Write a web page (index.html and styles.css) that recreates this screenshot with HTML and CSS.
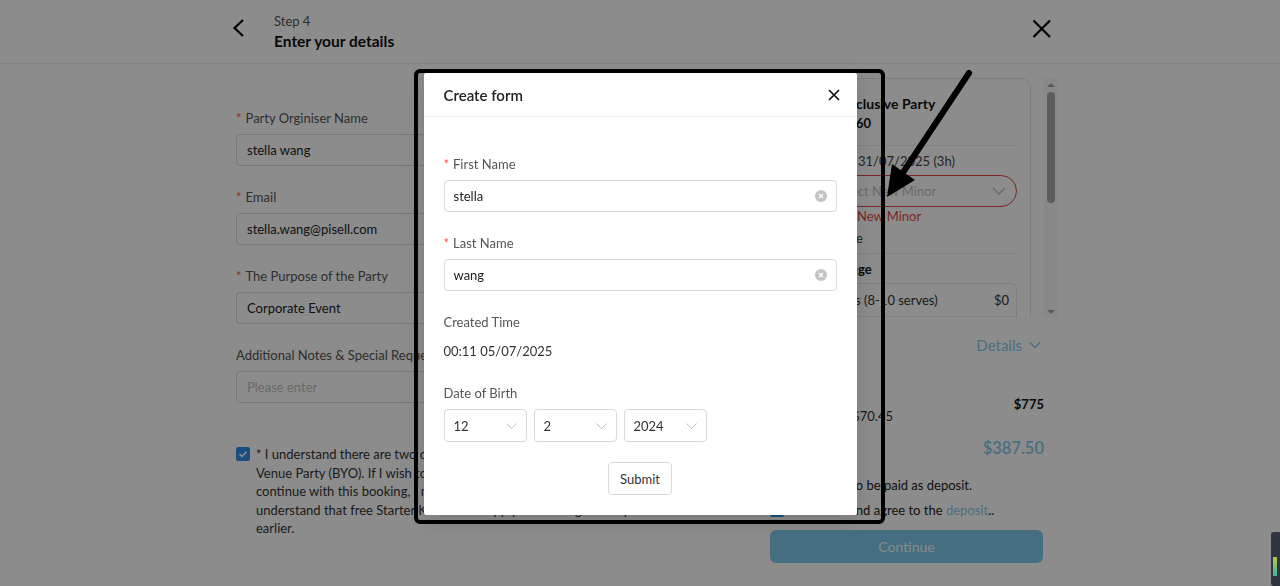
FILE: index.html
```html
<!DOCTYPE html>
<html lang="en">
<head>
    <meta charset="UTF-8">
    <meta name="viewport" content="width=device-width, initial-scale=1.0">
    <title>Enter your details</title>
    <link rel="stylesheet" href="styles.css">
</head>
<body>
    <header class="topbar">
        <div class="topbar-inner">
            <button class="icon-btn">
                <svg width="24" height="24" viewBox="0 0 24 24"><path d="M17 4 L8.5 12 L17 20" fill="none" stroke="#000" stroke-width="2.2"/></svg>
            </button>
            <div class="step">
                <div class="step-num">Step 4</div>
                <div class="step-title">Enter your details</div>
            </div>
            <button class="icon-btn">
                <svg width="24" height="24" viewBox="0 0 24 24"><path d="M3.5 4.5 L20 21 M20 4.5 L3.5 21" fill="none" stroke="#000" stroke-width="2.2"/></svg>
            </button>
        </div>
    </header>

    <main class="page">
        <form class="details-form">
            <div class="field">
                <label class="field-label"><span class="req">*</span>Party Orginiser Name</label>
                <input class="input" value="stella wang">
            </div>
            <div class="field">
                <label class="field-label"><span class="req">*</span>Email</label>
                <input class="input" value="stella.wang@pisell.com">
            </div>
            <div class="field">
                <label class="field-label"><span class="req">*</span>The Purpose of the Party</label>
                <input class="input" value="Corporate Event">
            </div>
            <div class="field">
                <label class="field-label">Additional Notes &amp; Special Requests</label>
                <input class="input" placeholder="Please enter">
            </div>
            <div class="terms">
                <span class="checkbox">
                    <svg width="14" height="14" viewBox="0 0 14 14"><path d="M3.5 7.2 L6 9.5 L10.5 4.8" fill="none" stroke="#fff" stroke-width="1.6"/></svg>
                </span>
                <p>* I understand there are two options: Exclusive Party or Bring Your Own<br>
                Venue Party (BYO). If I wish to bring my own food, I must choose BYO. To<br>
                continue with this booking, I must not bring outside food. I also<br>
                understand that free Starter Kick tickets apply to bookings 14 days or<br>
                earlier.</p>
            </div>
        </form>

        <aside class="side">
            <div class="side-scroll">
                <div class="card-view">
                    <div class="card">
                        <div class="product">
                            <div class="thumb"></div>
                            <div>
                                <div class="product-name">Exclusive Party</div>
                                <div class="product-price">$260</div>
                            </div>
                        </div>
                        <div class="divider first"></div>
                        <div class="kv"><span class="kv-key">Date</span><span>31/07/2025 (3h)</span></div>
                        <div class="pill-select">
                            <span>Select New Minor</span>
                            <svg width="14" height="8" viewBox="0 0 14 8"><path d="M1 1 L7 7 L13 1" fill="none" stroke="#bfbfbf" stroke-width="1.3"/></svg>
                        </div>
                        <div class="add-minor">+ Add New Minor</div>
                        <div class="muted-line">Private Venue</div>
                        <div class="divider"></div>
                        <div class="section-title">Venue Package</div>
                        <div class="pkg">
                            <div class="pkg-row"><span>Mini Cakes (8-10 serves)</span><span>$0</span></div>
                            <div class="pkg-row"><span>Party Food Platter</span><span>$0</span></div>
                            <div class="pkg-row"><span>Soft Drinks Jug</span><span>$0</span></div>
                            <div class="pkg-row"><span>Party Bags</span><span>$0</span></div>
                        </div>
                        <div class="section-title">Add-ons</div>
                        <div class="kv"><span class="kv-key">Extra</span><span>None</span></div>
                    </div>
                </div>
                <div class="scrollbar">
                    <span class="arrow-up"></span>
                    <span class="thumb-bar"></span>
                    <span class="arrow-down"></span>
                </div>
            </div>

            <div class="summary">
                <div class="details-toggle">
                    Details
                    <svg width="12" height="8" viewBox="0 0 12 8"><path d="M1 1.5 L6 6.5 L11 1.5" fill="none" stroke="#86c9e8" stroke-width="1.5"/></svg>
                </div>
                <div class="total-row">
                    <div>
                        <div>Total</div>
                        <div>Including GST $70.45</div>
                    </div>
                    <div class="total-price">$775</div>
                </div>
                <div class="deposit-row">
                    <span>Deposit</span>
                    <span class="deposit-price">$387.50</span>
                </div>
                <div class="note">50% of total to be paid as deposit.</div>
                <div class="agree">
                    <span class="checkbox"></span>
                    <span>I've read and agree to the <a href="#">deposit</a>..</span>
                </div>
                <button class="continue-btn" type="button">Continue</button>
            </div>
        </aside>
    </main>

    <div class="mask"></div>

    <div class="modal">
        <div class="modal-head">
            <div class="modal-title">Create form</div>
            <svg class="modal-close" width="12" height="12" viewBox="0 0 12 12"><path d="M1 1 L11 11 M11 1 L1 11" fill="none" stroke="#111" stroke-width="1.7"/></svg>
        </div>
        <div class="modal-body">
            <div class="m-field">
                <div class="m-label"><span class="req">*</span>First Name</div>
                <div class="m-input">
                    <span>stella</span>
                    <svg width="12" height="12" viewBox="0 0 12 12"><circle cx="6" cy="6" r="6" fill="#c4c4c4"/><path d="M4 4 L8 8 M8 4 L4 8" stroke="#fff" stroke-width="1.2"/></svg>
                </div>
            </div>
            <div class="m-field">
                <div class="m-label"><span class="req">*</span>Last Name</div>
                <div class="m-input">
                    <span>wang</span>
                    <svg width="12" height="12" viewBox="0 0 12 12"><circle cx="6" cy="6" r="6" fill="#c4c4c4"/><path d="M4 4 L8 8 M8 4 L4 8" stroke="#fff" stroke-width="1.2"/></svg>
                </div>
            </div>
            <div class="m-field">
                <div class="m-label">Created Time</div>
                <div class="m-value">00:11 05/07/2025</div>
            </div>
            <div class="m-field">
                <div class="m-label">Date of Birth</div>
                <div class="dob">
                    <div class="select"><span>12</span><svg width="11" height="6" viewBox="0 0 11 6"><path d="M0.5 0.5 L5.5 5.5 L10.5 0.5" fill="none" stroke="#bfbfbf" stroke-width="1"/></svg></div>
                    <div class="select"><span>2</span><svg width="11" height="6" viewBox="0 0 11 6"><path d="M0.5 0.5 L5.5 5.5 L10.5 0.5" fill="none" stroke="#bfbfbf" stroke-width="1"/></svg></div>
                    <div class="select"><span>2024</span><svg width="11" height="6" viewBox="0 0 11 6"><path d="M0.5 0.5 L5.5 5.5 L10.5 0.5" fill="none" stroke="#bfbfbf" stroke-width="1"/></svg></div>
                </div>
            </div>
            <div class="submit-row">
                <button class="btn" type="button">Submit</button>
            </div>
        </div>
    </div>

    <!-- annotation drawn over the screenshot -->
    <svg class="annotation" width="1280" height="586" viewBox="0 0 1280 586">
        <rect x="416" y="71" width="467" height="451" rx="4" fill="none" stroke="#000" stroke-width="4"/>
        <line x1="969" y1="73" x2="902" y2="174" stroke="#000" stroke-width="6" stroke-linecap="round"/>
        <polygon points="887,197 892,164 915,180" fill="#000"/>
    </svg>

    <div class="ext-widget"><span></span></div>
</body>
</html>
```

FILE: styles.css
```css
* {
    margin: 0;
    padding: 0;
    box-sizing: border-box;
}

body {
    font-family: Lato, 'Liberation Sans', sans-serif;
    font-size: 13px;
    color: #222;
    background: #fff;
    height: 586px;
    overflow: hidden;
}

input,
button {
    font: inherit;
    color: inherit;
}

/* top bar */
.topbar {
    height: 64px;
    border-bottom: 1px solid #ebebeb;
}

.topbar-inner {
    width: 828px;
    margin: 0 auto;
    display: flex;
    align-items: flex-start;
    padding-top: 12px;
}

.icon-btn {
    width: 24px;
    height: 24px;
    margin-top: 4px;
    border: none;
    background: none;
    display: flex;
}

.step {
    flex: 1;
    margin-left: 24px;
}

.step-num {
    font-size: 13px;
    line-height: 18px;
    color: #555;
}

.step-title {
    font-size: 15.5px;
    font-weight: 700;
    line-height: 22px;
    color: #111;
}

/* page */
.page {
    width: 808px;
    margin: 0 auto;
    padding-top: 14px;
    display: grid;
    grid-template-columns: 504px 274px;
    column-gap: 30px;
}

.details-form {
    padding-top: 29px;
}

.field {
    margin-bottom: 20px;
}

.field-label {
    display: block;
    line-height: 22px;
    margin-bottom: 5px;
    color: #555;
}

.req {
    color: #ff4d4f;
    margin-right: 4px;
}

.input {
    width: 100%;
    height: 32px;
    padding: 0 10px;
    border: 1px solid #d9d9d9;
    border-radius: 4px;
    background: #fff;
    color: #222;
    outline: none;
}

.input::placeholder {
    color: #bfbfbf;
}

.terms {
    display: flex;
    gap: 6px;
    padding-top: 22px;
    line-height: 18.5px;
    color: #333;
}

.checkbox {
    flex: none;
    width: 14px;
    height: 14px;
    margin-top: 2px;
    border-radius: 2px;
    background: #2f8fe6;
    display: flex;
}

/* right side */
.side-scroll {
    display: flex;
    height: 240px;
    margin-right: -14px;
}

.card-view {
    flex: 1;
    overflow: hidden;
    padding-right: 13px;
}

.card {
    border: 1px solid #e6e6e6;
    border-radius: 10px;
    padding: 15px 13px;
}

.product {
    display: flex;
    gap: 13px;
}

.thumb {
    width: 44px;
    height: 38px;
    border-radius: 6px;
    background: #eee;
}

.product-name {
    font-size: 14px;
    font-weight: 700;
    line-height: 20px;
    color: #111;
}

.product-price {
    font-weight: 700;
    line-height: 18px;
    color: #111;
}

.divider {
    height: 1px;
    background: #ececec;
    margin-top: 6px;
}

.divider.first {
    margin-top: 13px;
}

.kv {
    display: flex;
    margin-top: 5px;
    line-height: 20px;
    color: #444;
}

.kv-key {
    width: 74px;
}

.pill-select {
    height: 32px;
    margin: 4px 0 0 37px;
    padding: 0 10px 0 12px;
    border: 1px solid #e0473f;
    border-radius: 16px;
    display: flex;
    align-items: center;
    justify-content: space-between;
    color: #bfbfbf;
}

.add-minor {
    margin-left: 36px;
    line-height: 18px;
    color: #e0473f;
}

.muted-line {
    margin-top: 4px;
    line-height: 18px;
    color: #444;
}

.section-title {
    margin-top: 6px;
    line-height: 18px;
    font-weight: 700;
    color: #111;
}

.pkg {
    margin: 5px 0 10px;
    border: 1px solid #e6e6e6;
    border-radius: 6px;
}

.pkg-row {
    height: 32px;
    padding: 0 7px 0 13px;
    display: flex;
    align-items: center;
    justify-content: space-between;
    color: #333;
}

.pkg-row + .pkg-row {
    border-top: 1px solid #eee;
}

.scrollbar {
    width: 14px;
    padding: 5px 0 4px;
    display: flex;
    flex-direction: column;
    align-items: center;
    background: #f7f7f7;
}

.arrow-up {
    border-left: 4px solid transparent;
    border-right: 4px solid transparent;
    border-bottom: 4px solid #a3a3a3;
}

.thumb-bar {
    width: 8px;
    height: 111px;
    margin-top: 5px;
    border-radius: 4px;
    background: #a8a8a8;
}

.arrow-down {
    margin-top: auto;
    border-left: 4px solid transparent;
    border-right: 4px solid transparent;
    border-top: 4px solid #a3a3a3;
}

.summary {
    padding-top: 16px;
}

.details-toggle {
    display: flex;
    justify-content: flex-end;
    align-items: center;
    gap: 7px;
    padding-right: 3px;
    font-size: 15px;
    line-height: 22px;
    color: #86c9e8;
}

.total-row {
    display: flex;
    justify-content: space-between;
    margin-top: 33px;
    line-height: 18px;
    color: #333;
}

.total-price {
    margin-top: 6px;
    font-weight: 700;
    color: #111;
}

.deposit-row {
    display: flex;
    justify-content: space-between;
    align-items: center;
    margin-top: 10px;
    line-height: 26px;
}

.deposit-price {
    font-size: 16.5px;
    font-weight: 600;
    color: #86c9e8;
}

.note {
    margin-top: 15px;
    padding-left: 8px;
    line-height: 18px;
}

.agree {
    display: flex;
    gap: 14px;
    margin-top: 7px;
    line-height: 18px;
}

.agree a {
    color: #86c9e8;
    text-decoration: none;
}

.continue-btn {
    width: 273px;
    height: 33px;
    margin-top: 11px;
    border: none;
    border-radius: 6px;
    background: #7fcbea;
    color: #f4fbfe;
    font-size: 14px;
}

/* modal */
.mask {
    position: fixed;
    inset: 0;
    background: rgba(0, 0, 0, 0.45);
}

.modal {
    position: fixed;
    top: 73px;
    left: 50%;
    width: 433px;
    margin-left: -216.5px;
    background: #fff;
    border-radius: 2px;
    box-shadow: 0 6px 16px rgba(0, 0, 0, 0.08), 0 9px 28px 8px rgba(0, 0, 0, 0.05);
}

.modal-head {
    height: 44px;
    padding: 0 17px 0 20px;
    display: flex;
    align-items: center;
    justify-content: space-between;
    border-bottom: 1px solid #f0f0f0;
}

.modal-title {
    font-size: 15px;
    font-weight: 600;
    color: #222;
}

.modal-body {
    padding: 36px 20px 20px;
}

.m-field {
    margin-bottom: 20px;
}

.m-label {
    line-height: 22px;
    margin-bottom: 5px;
    color: #555;
}

.m-input {
    height: 32px;
    padding: 0 9px;
    border: 1px solid #d9d9d9;
    border-radius: 4px;
    display: flex;
    align-items: center;
    justify-content: space-between;
    color: #222;
}

.m-value {
    padding-top: 2px;
    line-height: 22px;
    color: #333;
}

.dob {
    display: flex;
    gap: 7px;
}

.select {
    width: 83px;
    height: 33px;
    padding: 0 9px;
    border: 1px solid #d9d9d9;
    border-radius: 4px;
    display: flex;
    align-items: center;
    justify-content: space-between;
    color: #333;
}

.submit-row {
    display: flex;
    justify-content: center;
}

.btn {
    height: 33px;
    padding: 0 11px;
    border: 1px solid #d9d9d9;
    border-radius: 4px;
    background: #fff;
    color: #333;
}

.annotation {
    position: fixed;
    top: 0;
    left: 0;
    pointer-events: none;
}

.ext-widget {
    position: fixed;
    right: 0;
    top: 532px;
    width: 9px;
    height: 54px;
    padding: 25px 0 0 2px;
    border-radius: 3px 0 0 3px;
    background: #2f3542;
}

.ext-widget span {
    display: block;
    width: 4px;
    height: 19px;
    background: linear-gradient(#b8c94a, #3fb39a);
}
```
